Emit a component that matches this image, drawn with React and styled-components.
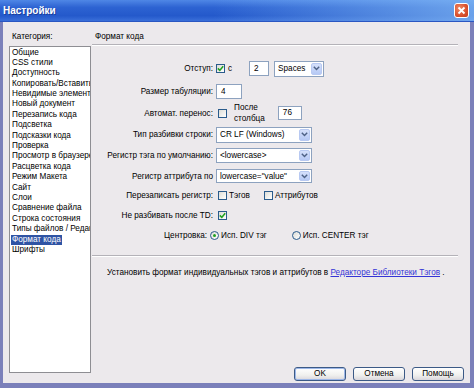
import React from "react"
import styled, { createGlobalStyle } from 'styled-components'

const categories = [
  'Общие', 'CSS стили', 'Доступность', 'Копировать/Вставить', 'Невидимые элементы',
  'Новый документ', 'Перезапись кода', 'Подсветка', 'Подсказки кода', 'Проверка',
  'Просмотр в браузере', 'Расцветка кода', 'Режим Макета', 'Сайт', 'Слои',
  'Сравнение файла', 'Строка состояния', 'Типы файлов / Редактор', 'Формат кода', 'Шрифты'
]

const Check = ({ checked }) => (
  <CheckBox>
    {checked && (
      <svg width="7" height="7" viewBox="0 0 7 7">
        <path d="M0.8 3.4 L2.8 5.4 L6.2 1.2" fill="none" stroke="#21a121" strokeWidth="1.6" />
      </svg>
    )}
  </CheckBox>
)

const Select = ({ value, width, height }) => (
  <SelectBox $w={width} $h={height}>
    <span>{value}</span>
    <SelectArrow>
      <svg width="7" height="5" viewBox="0 0 7 5">
        <path d="M0.8 0.8 L3.5 3.6 L6.2 0.8" fill="none" stroke="#4d6185" strokeWidth="1.4" />
      </svg>
    </SelectArrow>
  </SelectBox>
)

const App = () => {
  return (
    <>
      <GlobalStyle />
      <Window>
        <TitleBar>
          <Title>Настройки</Title>
          <CloseButton>
            <svg width="9" height="9" viewBox="0 0 9 9">
              <path d="M1.5 1.5 L7.5 7.5 M7.5 1.5 L1.5 7.5" stroke="#fff" strokeWidth="1.8" />
            </svg>
          </CloseButton>
        </TitleBar>
        <Frame>
          <Sidebar>
            <Caption $pad={3}>Категория:</Caption>
            <List>
              {categories.map((c) => (
                <ListItem key={c}>
                  <ItemText $selected={c === 'Формат кода'}>{c}</ItemText>
                </ListItem>
              ))}
            </List>
          </Sidebar>

          <Panel>
            <Caption $pad={4}>Формат кода</Caption>
            <Separator />

            <Form>
              <Row $h={23}>
                <Label>Отступ:</Label>
                <Controls>
                  <Check checked />
                  <Text style={{ marginLeft: 3 }}>с</Text>
                  <Input $w={20} $h={15} $ml={17}>2</Input>
                  <Spacer $w={5} />
                  <Select value="Spaces" width={50} height={16} />
                </Controls>
              </Row>
              <Row $h={22}>
                <Label>Размер табуляции:</Label>
                <Controls>
                  <Input $w={26} $h={15}>4</Input>
                </Controls>
              </Row>
              <Row $h={22}>
                <Label>Автомат. перенос:</Label>
                <Controls $ml={2}>
                  <Check />
                  <TwoLine>После<br />столбца</TwoLine>
                  <Input $w={24} $h={14} $ml={13}>76</Input>
                </Controls>
              </Row>
              <Row $h={21}>
                <Label>Тип разбивки строки:</Label>
                <Controls>
                  <Select value="CR LF (Windows)" width={96} height={16} />
                </Controls>
              </Row>
              <Row $h={21}>
                <Label>Регистр тэга по умолчанию:</Label>
                <Controls>
                  <Select value="<lowercase>" width={96} height={15} />
                </Controls>
              </Row>
              <Row $h={20}>
                <Label>Регистр аттрибута по</Label>
                <Controls>
                  <Select value={'lowercase="value"'} width={96} height={14} />
                </Controls>
              </Row>
              <Row $h={19}>
                <Label>Перезаписать регистр:</Label>
                <Controls $ml={2}>
                  <Check />
                  <Text style={{ marginLeft: 2 }}>Тэгов</Text>
                  <Spacer $w={14} />
                  <Check />
                  <Text style={{ marginLeft: 2 }}>Аттрибутов</Text>
                </Controls>
              </Row>
              <Row $h={20}>
                <Label>Не разбивать после TD:</Label>
                <Controls $ml={2}>
                  <Check checked />
                </Controls>
              </Row>
              <Row $h={20}>
                <Label $pr={6}>Центровка:</Label>
                <Controls $ml={-6}>
                  <Radio $checked />
                  <Text style={{ marginLeft: 2 }}>Исп. DIV тэг</Text>
                  <Spacer $w={25} />
                  <Radio />
                  <Text style={{ marginLeft: 2 }}>Исп. CENTER тэг</Text>
                </Controls>
              </Row>
            </Form>

            <Separator $mt={10} />
            <Note>
              Установить формат индивидуальных тэгов и аттрибутов в <Link>Редакторе Библиотеки Тэгов</Link> .
            </Note>

            <ButtonBar>
              <Button $default>OK</Button>
              <Button>Отмена</Button>
              <Button>Помощь</Button>
            </ButtonBar>
          </Panel>
        </Frame>
      </Window>
    </>
  )
}

// styles

const GlobalStyle = createGlobalStyle`
  html, body {
    margin: 0;
    padding: 0;
  }
  body {
    width: 474px;
    height: 388px;
    overflow: hidden;
    background: #ece9ec;
    font-family: "Liberation Sans", Arial, sans-serif;
    font-size: 8.2px;
    color: #000;
  }
`

const Window = styled.div`
  width: 474px;
  height: 388px;
  display: flex;
  flex-direction: column;
`

const TitleBar = styled.div`
  height: 22px;
  flex: none;
  display: flex;
  align-items: center;
  justify-content: space-between;
  padding: 0 5px 0 3px;
  background:
    linear-gradient(to right, rgba(120, 170, 240, 0) 45%, rgba(130, 185, 245, 0.75) 100%),
    linear-gradient(#4f87e6 0%, #2d63d2 35%, #2459cb 75%, #3a6fd9 100%);
  border-bottom: 1px solid #2a56c2;
  box-sizing: border-box;
`

const Title = styled.span`
  color: #fff;
  font-size: 10px;
  font-weight: bold;
  text-shadow: 1px 1px 0 #1b3f9a;
`

const CloseButton = styled.div`
  width: 15px;
  height: 15px;
  box-sizing: border-box;
  border: 1px solid #fff;
  border-radius: 3px;
  background: radial-gradient(circle at 35% 35%, #f08a66, #d9502e 60%, #c13d1c);
  display: flex;
  align-items: center;
  justify-content: center;
`

const Frame = styled.div`
  flex: 1;
  display: flex;
  border-left: 3px solid #7b80ba;
  border-right: 4px solid #7b80ba;
  border-bottom: 5px solid #7b80ba;
  padding: 8px 0 0 6px;
  background: #ece9ec;
  min-height: 0;
`

const Sidebar = styled.div`
  width: 82px;
  flex: none;
  display: flex;
  flex-direction: column;
`

const Caption = styled.div`
  height: 14px;
  line-height: 14px;
  padding-left: ${(p) => p.$pad}px;
`

const List = styled.div`
  margin-top: 2px;
  height: 327px;
  box-sizing: border-box;
  border: 1px solid #8e8e93;
  background: #fff;
  padding: 0.5px 1px;
  overflow: hidden;
`

const ListItem = styled.div`
  height: 10.4px;
  line-height: 10.4px;
  white-space: nowrap;
`

const ItemText = styled.span`
  display: inline-block;
  padding: 0 1px;
  background: ${(p) => (p.$selected ? '#2f54a4' : 'transparent')};
  color: ${(p) => (p.$selected ? '#fff' : '#000')};
`

const Panel = styled.div`
  flex: 1;
  display: flex;
  flex-direction: column;
  min-width: 0;
`

const Separator = styled.div`
  height: 1px;
  margin: ${(p) => p.$mt || 0}px 12px 0 1px;
  background: #b4b2b8;
  border-bottom: 1px solid #fff;
  flex: none;
`

const Form = styled.div`
  margin-top: 11px;
  display: flex;
  flex-direction: column;
`

const Row = styled.div`
  height: ${(p) => p.$h}px;
  display: grid;
  grid-template-columns: 122px auto;
  column-gap: 3px;
  align-items: center;
`

const Label = styled.div`
  text-align: right;
  white-space: nowrap;
  padding-right: ${(p) => p.$pr || 0}px;
`

const Controls = styled.div`
  display: flex;
  align-items: center;
  margin-left: ${(p) => p.$ml || 0}px;
`

const Text = styled.span`
  white-space: nowrap;
`

const TwoLine = styled.span`
  line-height: 11px;
  margin-left: 7px;
`

const Spacer = styled.span`
  width: ${(p) => p.$w}px;
  flex: none;
`

const CheckBox = styled.span`
  width: 9px;
  height: 9px;
  flex: none;
  box-sizing: border-box;
  border: 1px solid #2a5b8c;
  background: linear-gradient(135deg, #dcdcd6, #ffffff);
  display: flex;
  align-items: center;
  justify-content: center;
`

const Radio = styled.span`
  width: 9px;
  height: 9px;
  flex: none;
  box-sizing: border-box;
  border: 1px solid #2a5b8c;
  border-radius: 50%;
  background: linear-gradient(135deg, #dcdcd6, #ffffff);
  display: flex;
  align-items: center;
  justify-content: center;

  &::after {
    content: '';
    width: 3px;
    height: 3px;
    border-radius: 50%;
    background: ${(p) => (p.$checked ? '#21a121' : 'transparent')};
  }
`

const Input = styled.div`
  width: ${(p) => p.$w}px;
  height: ${(p) => p.$h}px;
  margin-left: ${(p) => p.$ml || 0}px;
  flex: none;
  box-sizing: border-box;
  border: 1px solid #8da2bf;
  background: #fff;
  padding-left: 4px;
  line-height: ${(p) => p.$h - 2}px;
`

const SelectBox = styled.div`
  width: ${(p) => p.$w}px;
  height: ${(p) => p.$h}px;
  flex: none;
  box-sizing: border-box;
  border: 1px solid #8da2bf;
  background: #fff;
  display: flex;
  align-items: center;
  justify-content: space-between;
  padding: 1px;

  span:first-child {
    padding-left: 2px;
    white-space: nowrap;
  }
`

const SelectArrow = styled.div`
  width: 11px;
  height: 100%;
  box-sizing: border-box;
  border: 1px solid #b8c9f2;
  border-radius: 2px;
  background: linear-gradient(#d5e0fb, #b6c9f5);
  display: flex;
  align-items: center;
  justify-content: center;
`

const Note = styled.div`
  margin-top: 10px;
  line-height: 12px;
  padding-left: 16px;
  white-space: nowrap;
`

const Link = styled.span`
  color: #3434d6;
  text-decoration: underline;
`

const ButtonBar = styled.div`
  margin-top: auto;
  display: flex;
  justify-content: flex-end;
  gap: 7px;
  padding: 0 6px 2px 0;
`

const Button = styled.div`
  width: 52px;
  height: 14px;
  box-sizing: border-box;
  border: 1px solid #3c5a86;
  border-radius: 3px;
  background: linear-gradient(#ffffff, #f0f0ee 60%, #d9d6dc);
  box-shadow: ${(p) => (p.$default ? 'inset 0 0 0 1px #9db7e8' : 'none')};
  text-align: center;
  line-height: 12px;
`

export default App
